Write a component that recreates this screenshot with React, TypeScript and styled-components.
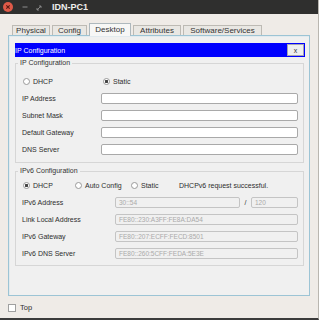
import styled, { createGlobalStyle } from 'styled-components';

const GlobalStyle = createGlobalStyle`
  html, body {
    margin: 0;
    padding: 0;
  }
  body {
    width: 319px;
    height: 320px;
    overflow: hidden;
    background: #efebe7;
    font-family: 'Liberation Sans', 'DejaVu Sans', sans-serif;
    color: #2e2e2e;
  }
  * {
    box-sizing: border-box;
  }
`;

const tabs = [
  { label: 'Physical', width: 38 },
  { label: 'Config', width: 35 },
  { label: 'Desktop', width: 42, active: true },
  { label: 'Attributes', width: 48 },
  { label: 'Software/Services', width: 79 },
];

const ipv4Rows = ['IP Address', 'Subnet Mask', 'Default Gateway', 'DNS Server'];

const ipv6Rows = [
  { label: 'Link Local Address', value: 'FE80::230:A3FF:FE8A:DA54' },
  { label: 'IPv6 Gateway', value: 'FE80::207:ECFF:FECD:8501' },
  { label: 'IPv6 DNS Server', value: 'FE80::260:5CFF:FEDA:5E3E' },
];

const App = () => {
  return (
    <Window>
      <GlobalStyle />
      <TitleBar>
        <CloseDot>
          <svg width="10" height="10" viewBox="0 0 10 10">
            <path d="M3.3 3.3 L6.7 6.7 M6.7 3.3 L3.3 6.7" stroke="#5a1a12" strokeWidth="1.1" />
          </svg>
        </CloseDot>
        <WinIcon $ml={9}>
          <svg width="6" height="10" viewBox="0 0 6 10">
            <path d="M0.5 5 H5.5" stroke="#8d8d8d" strokeWidth="1" />
          </svg>
        </WinIcon>
        <WinIcon $ml={8}>
          <svg width="6" height="10" viewBox="0 0 6 10">
            <path d="M1 8 L5 4 M3 4 H5 V6 M1 6 V8 H3" stroke="#8d8d8d" strokeWidth="0.9" fill="none" />
          </svg>
        </WinIcon>
        <TitleText>IDN-PC1</TitleText>
      </TitleBar>

      <TabRow>
        {tabs.map((t) => (
          <Tab key={t.label} $w={t.width} $active={!!t.active}>
            {t.label}
          </Tab>
        ))}
      </TabRow>

      <Panel>
        <DialogHeader>
          <DialogTitle>IP Configuration</DialogTitle>
          <DialogClose>x</DialogClose>
        </DialogHeader>

        <Group $pt={9} $pb={7} $mt={2}>
          <Legend>IP Configuration</Legend>
          <RadioRow>
            <Option $w={80}>
              <Radio />
              DHCP
            </Option>
            <Option $w={60}>
              <Radio $checked />
              Static
            </Option>
          </RadioRow>
          {ipv4Rows.map((label) => (
            <FieldRow key={label}>
              <FieldLabel $w={79}>{label}</FieldLabel>
              <Input />
            </FieldRow>
          ))}
        </Group>

        <Group $pt={5} $pb={6} $mt={4}>
          <Legend>IPv6 Configuration</Legend>
          <RadioRow>
            <Option $w={52}>
              <Radio $checked />
              DHCP
            </Option>
            <Option $w={56}>
              <Radio />
              Auto Config
            </Option>
            <Option $w={49}>
              <Radio />
              Static
            </Option>
            <Status>DHCPv6 request successful.</Status>
          </RadioRow>
          <FieldRow>
            <FieldLabel $w={93}>IPv6 Address</FieldLabel>
            <Input $disabled $w={125}>30::54</Input>
            <Slash>/</Slash>
            <Input $disabled $w={47}>120</Input>
          </FieldRow>
          {ipv6Rows.map((r) => (
            <FieldRow key={r.label}>
              <FieldLabel $w={93}>{r.label}</FieldLabel>
              <Input $disabled>{r.value}</Input>
            </FieldRow>
          ))}
        </Group>
      </Panel>

      <TopRow>
        <CheckBox />
        Top
      </TopRow>
    </Window>
  );
};

const Window = styled.div`
  width: 319px;
  height: 320px;
  display: flex;
  flex-direction: column;
  border-bottom: 2px solid #3b3b3b;
  border-right: 1px solid #b9b6b0;
`;

const TitleBar = styled.div`
  height: 14px;
  flex-shrink: 0;
  background: #2f2f2e;
  display: flex;
  align-items: center;
  padding-left: 3px;
`;

const CloseDot = styled.div`
  width: 10px;
  height: 10px;
  border-radius: 50%;
  background: #df5a48;
  display: flex;
`;

const WinIcon = styled.div<{ $ml: number }>`
  margin-left: ${(p) => p.$ml}px;
  display: flex;
`;

const TitleText = styled.span`
  margin-left: 10px;
  color: #eeeeec;
  font-size: 9px;
  font-weight: bold;
  line-height: 10px;
`;

const TabRow = styled.div`
  display: flex;
  align-items: flex-end;
  gap: 2px;
  height: 12px;
  margin-top: 9px;
  padding-left: 12px;
`;

const Tab = styled.div<{ $w: number; $active: boolean }>`
  width: ${(p) => p.$w}px;
  height: ${(p) => (p.$active ? 13 : 10)}px;
  margin-bottom: ${(p) => (p.$active ? -1 : 0)}px;
  position: relative;
  z-index: ${(p) => (p.$active ? 1 : 0)};
  display: flex;
  align-items: center;
  justify-content: center;
  padding-bottom: ${(p) => (p.$active ? 2 : 0)}px;
  font-size: 8px;
  color: #333;
  background: ${(p) => (p.$active ? '#f7f7f6' : '#e9e7e3')};
  border: 1px solid ${(p) => (p.$active ? '#aeb8bd' : '#bdbab4')};
  border-bottom: none;
`;

const Panel = styled.div`
  margin-left: 8px;
  width: 302px;
  height: 261px;
  flex-shrink: 0;
  background: #f0f0f0;
  border: 1px solid #9cc4d5;
  box-shadow: inset 1px 1px 0 #e2eaee;
  padding: 7px 4px 0 6px;
  display: flex;
  flex-direction: column;
`;

const DialogHeader = styled.div`
  height: 14px;
  background: #0000fe;
  display: flex;
  align-items: center;
  justify-content: space-between;
`;

const DialogTitle = styled.span`
  color: #ffffff;
  font-size: 7px;
`;

const DialogClose = styled.div`
  width: 17px;
  height: 12px;
  margin-right: 1px;
  background: #efefef;
  border: 1px solid #a5a5b0;
  font-size: 7px;
  color: #333;
  display: flex;
  align-items: center;
  justify-content: center;
`;

const Group = styled.fieldset<{ $pt: number; $pb: number; $mt: number }>`
  margin: ${(p) => p.$mt}px 1px 0 0;
  min-width: 0;
  border: 1px solid #d6d6d6;
  padding: ${(p) => p.$pt}px 5px ${(p) => p.$pb}px 6px;
  display: flex;
  flex-direction: column;
  gap: 6px;
`;

const Legend = styled.legend`
  font-size: 7px;
  line-height: 8px;
  padding: 0 2px;
  margin-left: -4px;
  color: #333;
`;

const RadioRow = styled.div`
  height: 11px;
  display: flex;
  align-items: center;
  font-size: 7px;
`;

const Option = styled.div<{ $w: number }>`
  width: ${(p) => p.$w}px;
  display: flex;
  align-items: center;
  gap: 3px;
  padding-left: 1px;
`;

const Radio = styled.span<{ $checked?: boolean }>`
  width: 7px;
  height: 7px;
  border-radius: 50%;
  border: 1px solid #9a9a9a;
  background: ${(p) =>
    p.$checked ? 'radial-gradient(circle, #444 0 1.4px, #fff 1.6px)' : '#fff'};
`;

const Status = styled.span`
  font-size: 7px;
`;

const FieldRow = styled.div`
  height: 11px;
  display: flex;
  align-items: center;
`;

const FieldLabel = styled.span<{ $w: number }>`
  width: ${(p) => p.$w}px;
  flex-shrink: 0;
  font-size: 7px;
`;

const Input = styled.div<{ $disabled?: boolean; $w?: number }>`
  ${(p) => (p.$w ? `width: ${p.$w}px;` : 'flex: 1;')}
  height: 11px;
  border: 1px solid ${(p) => (p.$disabled ? '#c4c4c4' : '#a9a9a9')};
  border-radius: 2px;
  background: ${(p) => (p.$disabled ? '#f0f0f0' : '#ffffff')};
  font-size: 6.5px;
  color: #aaaaaa;
  padding-left: 3px;
  display: flex;
  align-items: center;
  white-space: nowrap;
  overflow: hidden;
`;

const Slash = styled.span`
  width: 11px;
  text-align: center;
  font-size: 7px;
`;

const TopRow = styled.div`
  margin-top: 7px;
  padding-left: 8px;
  display: flex;
  align-items: center;
  gap: 4px;
  font-size: 7.5px;
`;

const CheckBox = styled.span`
  width: 8px;
  height: 8px;
  background: #fff;
  border: 1px solid #a0a0a0;
`;

export default App;
